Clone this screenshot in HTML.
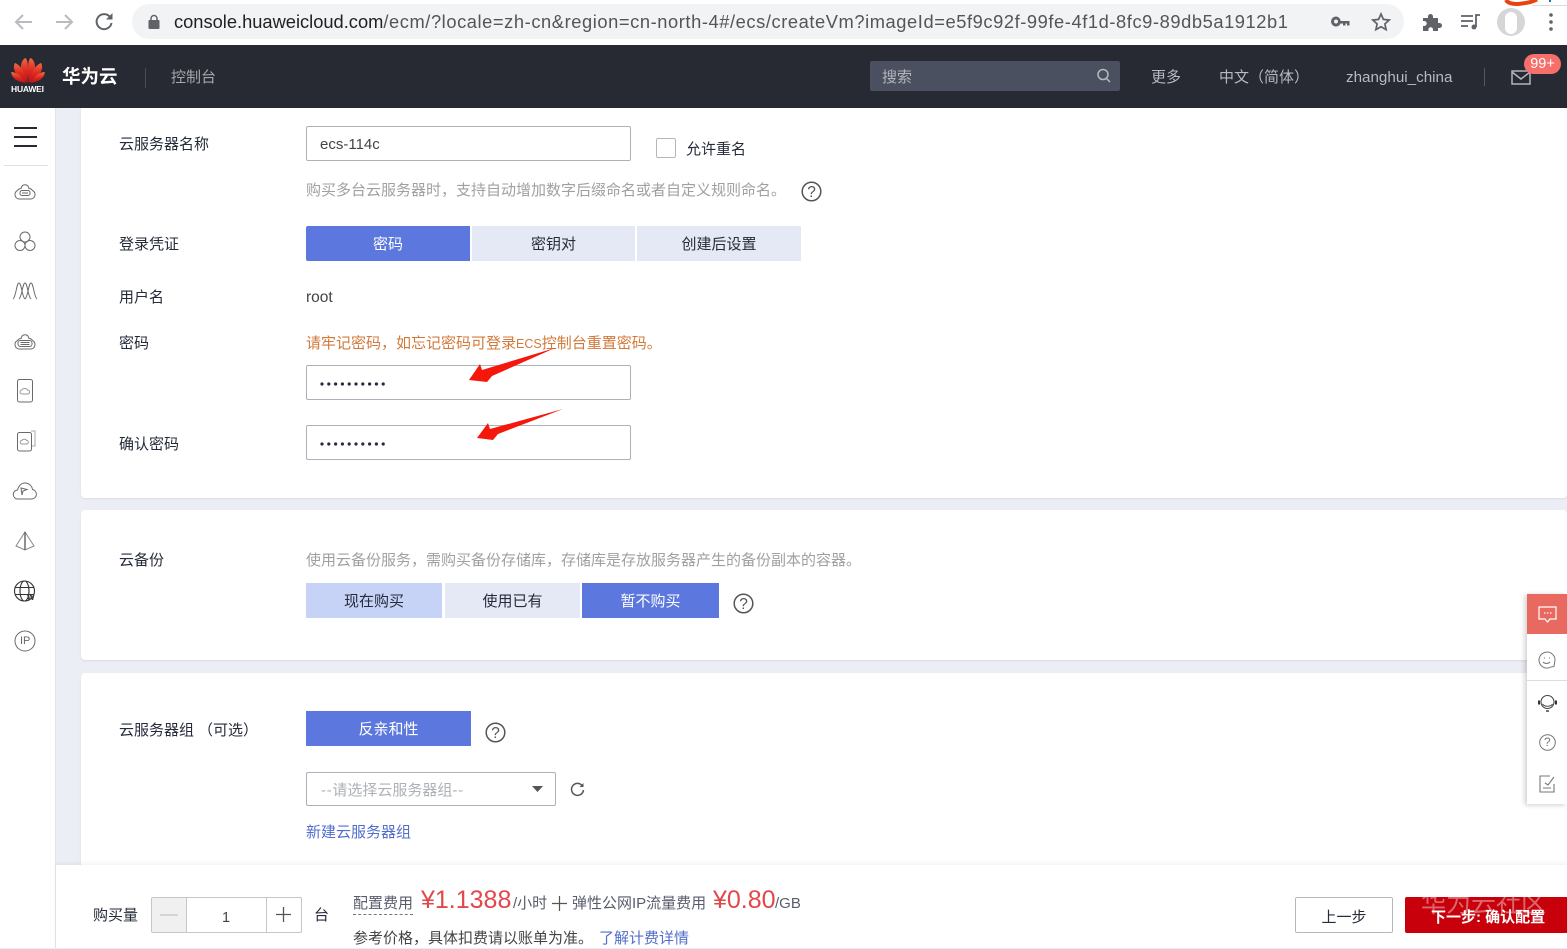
<!DOCTYPE html>
<html lang="zh-CN"><head><meta charset="utf-8"><title>华为云</title>
<style>
html,body{margin:0;padding:0}
body{width:1567px;height:948px;position:relative;overflow:hidden;background:#eceef5;font-family:"Liberation Sans","Noto Sans CJK SC",sans-serif;font-size:15px;color:#252b3a}
.a{position:absolute}
.t{position:absolute;white-space:nowrap;line-height:20px;font-size:15px;letter-spacing:0;margin-top:1px}
.g{color:#a0a0a0}
.box{position:absolute;box-sizing:border-box;border:1px solid #adb0b8;border-radius:2px;background:#fff}
.btn{position:absolute;height:35px;line-height:37px;text-align:center;background:#e5e9f6;color:#252b3a;font-size:15px}
.on{background:#5c78de;color:#fff}
.card{position:absolute;left:81px;width:1486px;background:#fff;border-radius:4px;box-shadow:0 1px 2px rgba(0,0,0,.08)}
svg{position:absolute;overflow:visible}
.ic{fill:none;stroke:#6a6a6a;stroke-width:1}
</style></head><body>

<!-- browser bar -->
<div class="a" style="left:0;top:0;width:1567px;height:45px;background:#fff"></div>
<svg style="left:0;top:0" width="130" height="45" fill="none" stroke-width="2">
<path d="M32 22H16M23 15l-7 7 7 7" stroke="#b9bbbe"/>
<path d="M72 22H56M65 15l7 7-7 7" stroke="#b9bbbe"/>
<path d="M110 17a7.500 7.500 0 1 0 1.500 6" stroke="#5f6368"/><path d="M112.500 13v6.500h-6.500z" fill="#5f6368"/>
</svg>
<div class="a" style="left:132px;top:4px;width:1272px;height:35px;border-radius:18px;background:#f1f3f4"></div>
<svg style="left:148px;top:15px" width="12" height="14"><rect x="0.500" y="5" width="11" height="9" rx="1" fill="#5f6368"/><path d="M3 6V3.500a3 3 0 0 1 6 0V6" fill="none" stroke="#5f6368" stroke-width="1.500"/></svg>
<div class="t" style="left:174px;top:10px;font-size:18.300px;line-height:22px;color:#555"><span style="color:#202124">console.huaweicloud.com</span><span style="letter-spacing:.58px">/ecm/?locale=zh-cn&amp;region=cn-north-4#/ecs/createVm?imageId=e5f9c92f-99fe-4f1d-8fc9-89db5a1912b1</span></div>
<svg style="left:1331px;top:15px" width="20" height="14" fill="#5f6368"><path d="M5 1.500a5 5 0 1 0 4.600 7H12v2h2.500v-2h1.500v2h2.500V6H9.600A5 5 0 0 0 5 1.500zm0 3a2 2 0 1 1 0 4 2 2 0 0 1 0-4z"/></svg>
<svg style="left:1371px;top:12px" width="20" height="20"><path d="M10 2l2.400 5.400 5.800.6-4.300 3.900 1.200 5.700-5.100-2.900-5.100 2.900 1.200-5.700L1.800 8l5.800-.6z" fill="none" stroke="#5f6368" stroke-width="1.700"/></svg>
<svg style="left:1422px;top:12px" width="20" height="20" fill="#5f6368"><path d="M1 6h5V4.500a2.500 2.500 0 0 1 5 0V6h5v5h1.500a2.500 2.500 0 0 1 0 5H16v3H11v-1.500a2.300 2.300 0 0 0-4.600 0V19H1v-5h1.200a2.500 2.500 0 0 0 0-5H1z"/></svg>
<svg style="left:1460px;top:13px" width="22" height="18" fill="none" stroke="#5f6368" stroke-width="1.800"><path d="M1 3h12M1 8h12M1 13h7"/><path d="M16 14V2h4"/><circle cx="14" cy="14" r="2.500" fill="#5f6368" stroke="none"/></svg>
<div class="a" style="left:1497px;top:8px;width:28px;height:28px;border-radius:50%;background:#d5d6d8"></div>
<div class="a" style="left:1505px;top:12px;width:12px;height:22px;border-radius:6px;background:#fff"></div>
<svg style="left:1500px;top:0" width="67" height="8" fill="none"><path d="M6 0c2 4 10 4.500 16 3.500 6-.5 11-2 15-4" stroke="#e8430f" stroke-width="4"/><rect x="49" y="0" width="2" height="2" fill="#1a6fc4" stroke="none"/><path d="M32 5.500H67" stroke="#cfcfcf" stroke-width="0.700"/></svg>
<svg style="left:1549px;top:13px" width="4" height="18" fill="#5f6368"><circle cx="2" cy="2" r="1.800"/><circle cx="2" cy="9" r="1.800"/><circle cx="2" cy="16" r="1.800"/></svg>

<!-- top nav -->
<div class="a" style="left:0;top:45px;width:1567px;height:63px;background:#272933"></div>
<svg style="left:11px;top:57px" width="34" height="27">
<defs><linearGradient id="lg" x1="0" y1="0" x2="0" y2="1"><stop offset="0" stop-color="#ef6a45"/><stop offset=".5" stop-color="#dd2a20"/><stop offset="1" stop-color="#b5141a"/></linearGradient></defs>
<g fill="url(#lg)">
<path d="M16.500 26C11.500 19 9.500 13.500 10 8.500c.3-3.500 2.500-7 4.500-7.500C17 3 17.500 10 16.500 26z"/>
<path d="M17.500 26C22.500 19 24.500 13.500 24 8.500c-.3-3.500-2.500-7-4.500-7.500C17 3 16.500 10 17.500 26z"/>
<path d="M15.500 26C9 21.500 4.500 17 3.200 12.500c-.7-2.500-.3-5 .8-6.500C9 8 14.500 15 15.500 26z"/>
<path d="M18.500 26C25 21.500 29.500 17 30.800 12.500c.7-2.500.3-5-.8-6.500C25 8 19.500 15 18.500 26z"/>
<path d="M14.500 26C8 25 3 22.500 1 18.500c-.5-1-.8-2.500-.8-3.500C5 15 11.500 19 14.500 26z"/>
<path d="M19.500 26C26 25 31 22.500 33 18.500c.5-1 .8-2.500.8-3.500C29 15 22.500 19 19.500 26z"/>
</g></svg>
<div class="t" style="left:11px;top:83px;font-size:8.500px;line-height:10px;color:#fff;font-weight:bold;width:33px;letter-spacing:-.2px">HUAWEI</div>
<div class="t" style="left:62px;top:64px;font-size:18.500px;line-height:24px;color:#fff;font-weight:bold">华为云</div>
<div class="a" style="left:145px;top:68px;width:1px;height:20px;background:#4a4c55"></div>
<div class="t" style="left:171px;top:67px;color:#a6a7ab">控制台</div>
<div class="a" style="left:870px;top:61px;width:250px;height:30px;background:#4a505f;border-radius:2px"></div>
<div class="t" style="left:882px;top:67px;color:#b3b5ba">搜索</div>
<svg style="left:1096px;top:68px" width="16" height="16" fill="none" stroke="#b8bac0" stroke-width="1.500"><circle cx="7" cy="6.500" r="5"/><path d="M10.500 10.500l3.500 3.500"/></svg>
<div class="t" style="left:1151px;top:67px;color:#b9bac0">更多</div>
<div class="t" style="left:1219px;top:67px;color:#b9bac0">中文（简体）</div>
<div class="t" style="left:1346px;top:67px;color:#b9bac0;font-size:15.200px">zhanghui_china</div>
<div class="a" style="left:1484px;top:68px;width:1px;height:18px;background:#55575f"></div>
<svg style="left:1511px;top:70px" width="20" height="15" fill="none" stroke="#b4b6bc" stroke-width="1.500"><rect x="1" y="1" width="18" height="13"/><path d="M1 2l9 7 9-7"/></svg>
<div class="a" style="left:1524px;top:54px;width:37px;height:20px;border-radius:10px;background:#f66f6a;color:#fff;text-align:center;font-size:14.500px;line-height:21px">99+</div>

<!-- sidebar -->
<div class="a" style="left:0;top:108px;width:55px;height:840px;background:#fff;border-right:1px solid #e3e4ea"></div>
<div class="a" style="left:13.500px;top:127px;width:23px;height:2px;background:#272933"></div>
<div class="a" style="left:13.500px;top:136px;width:23px;height:2px;background:#272933"></div>
<div class="a" style="left:13.500px;top:145px;width:23px;height:2px;background:#272933"></div>
<div class="a" style="left:4px;top:165px;width:44px;height:1px;background:#dfe0e4"></div>
<svg style="left:13px;top:182px" width="24" height="18" class="ic"><path d="M6 17a4.500 4.500 0 0 1-1.500-8.500C5.500 7 7 6.500 8 6.500 9 1.500 15 1.500 16 6.500c1 0 2.500.5 3.500 2A4.500 4.500 0 0 1 18 17z"/><rect x="7" y="8.500" width="10" height="5" rx="2"/><path d="M9 11h6"/></svg>
<svg style="left:14px;top:231px" width="22" height="21" class="ic"><circle cx="11" cy="6" r="5"/><circle cx="6" cy="14.500" r="5"/><circle cx="16" cy="14.500" r="5"/></svg>
<svg style="left:13px;top:282px" width="24" height="18" class="ic"><path d="M0 17C3 15 3.500 1 6 1S9 15 12 17"/><path d="M6 17C9 15 9.500 1 12 1S15 15 18 17"/><path d="M12 17C15 15 15.500 1 18 1S21 15 24 17"/></svg>
<svg style="left:13px;top:332px" width="24" height="18" class="ic"><path d="M6 17a4.500 4.500 0 0 1-1.500-8.500C5.500 7 7 6.500 8 6.500 9 1.500 15 1.500 16 6.500c1 0 2.500.5 3.500 2A4.500 4.500 0 0 1 18 17z"/><rect x="5" y="8.500" width="14" height="6" rx="2.500"/><path d="M7.500 10.500h9M7.500 12.500h9"/></svg>
<svg style="left:17px;top:379px" width="16" height="24" class="ic"><rect x="0.500" y="0.500" width="15" height="22.500" rx="2"/><path d="M5 15a2 2 0 0 1 0-4c.5-2 5-2 5.500 0a2 2 0 0 1 0 4z" stroke="#999"/></svg>
<svg style="left:17px;top:430px" width="19" height="22" class="ic"><path d="M14 1h4v15h-3" stroke="#aaa"/><rect x="0.500" y="2.500" width="14" height="18.500" rx="2"/><path d="M5 14a1.800 1.800 0 0 1 0-3.600c.5-1.600 4-1.600 4.500 0a1.800 1.800 0 0 1 0 3.600z" stroke="#999"/></svg>
<svg style="left:13px;top:482px" width="24" height="18" class="ic"><path d="M5 17a4.500 4.500 0 0 1-.5-9C6 3 9 1 12 1c4 0 7 3 7.500 6.500A4.800 4.800 0 0 1 19 17z"/><path d="M8 6l6 1.500-4 1.500-1 4z"/></svg>
<svg style="left:15px;top:531px" width="20" height="21" class="ic"><path d="M10 1L1 15l9 4 9-4z" stroke="#888"/><path d="M10 1v18" stroke-width="1.500"/></svg>
<svg style="left:13px;top:580px" width="24" height="23" fill="none" stroke="#333" stroke-width="1.100"><circle cx="11.500" cy="11" r="10"/><ellipse cx="11.500" cy="11" rx="4.500" ry="10"/><path d="M2 7.500h19M2 14.500h19"/></svg>
<div class="t" style="left:27px;top:593px;font-size:8px;line-height:8px;font-weight:bold;color:#333">W</div>
<svg style="left:14px;top:630px" width="22" height="22" class="ic"><circle cx="11" cy="11" r="10"/></svg>
<div class="t" style="left:20px;top:633px;font-size:11px;line-height:14px;color:#666">IP</div>

<!-- cards -->
<div class="card" style="top:108px;height:390px;border-radius:0 0 4px 4px"></div>
<div class="card" style="top:510px;height:150px"></div>
<div class="card" style="top:673px;height:192px;border-radius:4px 4px 0 0"></div>

<!-- form -->
<div class="t" style="left:119px;top:134px">云服务器名称</div>
<div class="box" style="left:306px;top:126px;width:325px;height:35px"></div>
<div class="t" style="left:320px;top:134px;color:#444;font-size:15px">ecs-114c</div>
<div class="box" style="left:656px;top:138px;width:20px;height:20px;border-color:#b5b7bc"></div>
<div class="t" style="left:686px;top:139px">允许重名</div>
<div class="t g" style="left:306px;top:180px">购买多台云服务器时，支持自动增加数字后缀命名或者自定义规则命名。</div>
<svg style="left:801px;top:181px" width="21" height="21"><circle cx="10.500" cy="10.500" r="9.300" fill="none" stroke="#555" stroke-width="1.500"/><text x="10.500" y="16" text-anchor="middle" font-size="15.500" fill="#555" font-family="Liberation Sans">?</text></svg>

<div class="t" style="left:119px;top:234px">登录凭证</div>
<div class="btn on" style="left:306px;top:226px;width:164px;border-radius:2px 0 0 2px">密码</div>
<div class="btn" style="left:472px;top:226px;width:163px">密钥对</div>
<div class="btn" style="left:637px;top:226px;width:164px">创建后设置</div>

<div class="t" style="left:119px;top:287px">用户名</div>
<div class="t" style="left:306px;top:287px;color:#444;font-size:15.500px">root</div>

<div class="t" style="left:119px;top:333px">密码</div>
<div class="t" style="left:306px;top:333px;color:#d2793a">请牢记密码，如忘记密码可登录<span style="font-size:12.500px">ECS</span>控制台重置密码。</div>
<div class="box" style="left:306px;top:365px;width:325px;height:35px"></div>
<div class="box" style="left:306px;top:425px;width:325px;height:35px"></div>
<svg style="left:320px;top:380px" width="66" height="70" fill="#252b3a"><g><circle cx="2" cy="4" r="1.600"/><circle cx="8.800" cy="4" r="1.600"/><circle cx="15.600" cy="4" r="1.600"/><circle cx="22.400" cy="4" r="1.600"/><circle cx="29.200" cy="4" r="1.600"/><circle cx="36" cy="4" r="1.600"/><circle cx="42.800" cy="4" r="1.600"/><circle cx="49.600" cy="4" r="1.600"/><circle cx="56.400" cy="4" r="1.600"/><circle cx="63.200" cy="4" r="1.600"/></g><g transform="translate(0,60)"><circle cx="2" cy="4" r="1.600"/><circle cx="8.800" cy="4" r="1.600"/><circle cx="15.600" cy="4" r="1.600"/><circle cx="22.400" cy="4" r="1.600"/><circle cx="29.200" cy="4" r="1.600"/><circle cx="36" cy="4" r="1.600"/><circle cx="42.800" cy="4" r="1.600"/><circle cx="49.600" cy="4" r="1.600"/><circle cx="56.400" cy="4" r="1.600"/><circle cx="63.200" cy="4" r="1.600"/></g></svg>
<div class="t" style="left:119px;top:434px">确认密码</div>

<!-- red arrows -->
<svg style="left:0;top:0" width="1567" height="948" fill="#f5170c">
<path d="M555 348L492 376 487 382 469 380 480 364 482 370z"/>
<path d="M563 409L498 434 493 440 477 438 488 423 490 429z"/>
</svg>

<div class="t" style="left:119px;top:550px">云备份</div>
<div class="t g" style="left:306px;top:550px">使用云备份服务，需购买备份存储库，存储库是存放服务器产生的备份副本的容器。</div>
<div class="btn" style="left:306px;top:583px;width:136px;background:#c7d3f6">现在购买</div>
<div class="btn" style="left:445px;top:583px;width:135px">使用已有</div>
<div class="btn on" style="left:582px;top:583px;width:137px">暂不购买</div>
<svg style="left:733px;top:593px" width="21" height="21"><circle cx="10.500" cy="10.500" r="9.300" fill="none" stroke="#555" stroke-width="1.500"/><text x="10.500" y="16" text-anchor="middle" font-size="15.500" fill="#555" font-family="Liberation Sans">?</text></svg>

<div class="t" style="left:119px;top:720px">云服务器组<span style="margin-left:4px;letter-spacing:0">（可选）</span></div>
<div class="btn on" style="left:306px;top:711px;width:165px;line-height:38px">反亲和性</div>
<svg style="left:485px;top:722px" width="21" height="21"><circle cx="10.500" cy="10.500" r="9.300" fill="none" stroke="#555" stroke-width="1.500"/><text x="10.500" y="16" text-anchor="middle" font-size="15.500" fill="#555" font-family="Liberation Sans">?</text></svg>
<div class="box" style="left:306px;top:772px;width:250px;height:34px"></div>
<div class="t" style="left:321px;top:780px;color:#adb0b8"><span style="letter-spacing:.7px">--</span>请选择云服务器组<span style="letter-spacing:.7px">--</span></div>
<svg style="left:532px;top:786px" width="11" height="6"><path d="M0 0h11L5.500 6z" fill="#555"/></svg>
<svg style="left:570px;top:782px" width="15" height="15" fill="none" stroke="#555" stroke-width="1.500"><path d="M12.500 4a6 6 0 1 0 1 4"/><path d="M13.500 1v4h-4" fill="#555" stroke="none"/></svg>
<div class="t" style="left:306px;top:822px;color:#526ecc">新建云服务器组</div>

<!-- footer -->
<div class="a" style="left:56px;top:865px;width:1511px;height:83px;background:#fff;box-shadow:0 -2px 4px rgba(0,0,0,.05)"></div>
<div class="t" style="left:93px;top:905px">购买量</div>
<div class="box" style="left:151px;top:897px;width:151px;height:36px;border-color:#c5c6cb"></div>
<div class="a" style="left:152px;top:898px;width:34px;height:34px;background:#f0f0f1;border-right:1px solid #c5c6cb"></div>
<div class="a" style="left:160px;top:914px;width:18px;height:2px;background:#d5d5d8"></div>
<div class="a" style="left:266px;top:898px;width:1px;height:34px;background:#c5c6cb"></div>
<div class="t" style="left:222px;top:907px;color:#444;font-size:14.500px">1</div>
<svg style="left:276px;top:907px" width="15" height="15"><path d="M0 7.500h15M7.500 0v15" stroke="#555" stroke-width="1.300"/></svg>
<div class="t" style="left:314px;top:905px">台</div>
<div class="t" style="left:353px;top:892px;color:#575d6c;border-bottom:1px dashed #777;line-height:21px">配置费用</div>
<div class="t" style="left:421px;top:884px;font-size:25px;line-height:30px;color:#e2474b">¥1.1388</div>
<div class="t" style="left:513px;top:893px;color:#575d6c">/小时</div>
<svg style="left:552px;top:896px" width="15" height="15"><path d="M0 7.500h15M7.500 0v15" stroke="#555" stroke-width="1.200"/></svg>
<div class="t" style="left:572px;top:893px;color:#575d6c">弹性公网IP流量费用</div>
<div class="t" style="left:713px;top:884px;font-size:25px;line-height:30px;color:#e2474b">¥0.80</div>
<div class="t" style="left:775px;top:893px;color:#575d6c">/GB</div>
<div class="t" style="left:353px;top:928px;color:#444">参考价格，具体扣费请以账单为准。</div>
<div class="t" style="left:599px;top:928px;color:#526ecc">了解计费详情</div>
<div class="box" style="left:1295px;top:897px;width:98px;height:36px;border-color:#b5b7bc;text-align:center;line-height:39px;color:#252b3a">上一步</div>
<div class="a" style="left:1405px;top:897px;width:162px;height:36px;background:#c7000b;border-radius:2px 0 0 2px"></div>
<div class="t" style="left:1421px;top:888px;font-size:25px;line-height:30px;color:rgba(255,255,255,.4)">华为云社区</div>
<div class="t" style="left:1431px;top:907px;color:#fff;font-weight:bold">下一步: 确认配置</div>

<!-- right float -->
<div class="a" style="left:1527px;top:594px;width:40px;height:210px;background:#fff;box-shadow:-2px 1px 5px rgba(0,0,0,.2)"></div>
<div class="a" style="left:1527px;top:594px;width:40px;height:40px;background:#e8695f"></div>
<svg style="left:1538px;top:606px" width="19" height="18" fill="none" stroke="#fff" stroke-width="1.200"><path d="M1 1h17v12h-6l-2.500 3-2.500-3H1z"/><path d="M6 7h1.500M9 7h1.500M12 7h1.500"/></svg>
<svg style="left:1538px;top:651px" width="18" height="18" fill="none" stroke="#777" stroke-width="1"><path d="M17 9a8 8 0 1 0-4 7l3-.5z"/><path d="M5 11c2 2 5 2 7 0M6 7h1M11 7h1"/></svg>
<div class="a" style="left:1527px;top:680px;width:40px;height:1px;background:#ddd"></div>
<svg style="left:1537px;top:693px" width="21" height="21" fill="none" stroke="#444" stroke-width="1.100"><circle cx="10.500" cy="9" r="6.500"/><path d="M5.500 11c2 3 8 3 10 0"/><rect x="1" y="7.500" width="2" height="4" fill="#333" stroke="none"/><rect x="18" y="7.500" width="2" height="4" fill="#333" stroke="none"/><path d="M9 18h3" stroke-width="1.500"/></svg>
<svg style="left:1539px;top:734px" width="17" height="17" fill="none" stroke="#777" stroke-width="1"><circle cx="8.500" cy="8.500" r="7.800"/></svg>
<div class="t" style="left:1544px;top:733px;font-size:12px;line-height:17px;color:#777">?</div>
<svg style="left:1539px;top:775px" width="17" height="18" fill="none" stroke="#777" stroke-width="1.100"><path d="M15 9v8H1V1h10"/><path d="M6 8l3 2 6-8M4 13h8"/></svg>
</body></html>
